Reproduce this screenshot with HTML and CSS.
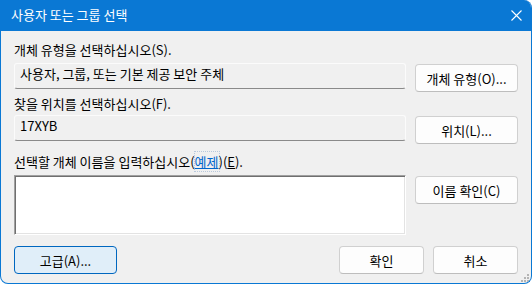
FILE: index.html
```html
<!DOCTYPE html>
<html>
  <head>
    <title>사용자 또는 그룹 선택</title>
    <link rel="stylesheet" href="styles.css">
  </head>
  <body>
    <div class="window">
      <div class="titlebar">
        <span class="title">사용자 또는 그룹 선택</span>
        <svg class="close" width="11" height="11" viewBox="0 0 11 11">
          <path d="M0.5 0.5 L10.5 10.5 M10.5 0.5 L0.5 10.5" stroke="#ffffff" stroke-width="1.1" fill="none" />
        </svg>
      </div>

      <div class="content">
        <div class="label label-first">개체 유형을 선택하십시오(S).</div>
        <div class="row">
          <div class="field">사용자, 그룹, 또는 기본 제공 보안 주체</div>
          <button class="btn btn-side">개체 유형(O)...</button>
        </div>

        <div class="label label-second">찾을 위치를 선택하십시오(F).</div>
        <div class="row">
          <div class="field">17XYB</div>
          <button class="btn btn-side">위치(L)...</button>
        </div>

        <div class="label label-third">선택할 개체 이름을 입력하십시오(<a class="link">예제</a>)(<u>E</u>).</div>
        <div class="row">
          <textarea class="names"></textarea>
          <button class="btn btn-side">이름 확인(C)</button>
        </div>

        <div class="footer">
          <button class="btn btn-default">고급(A)...</button>
          <div class="footer-right">
            <button class="btn btn-footer">확인</button>
            <button class="btn btn-footer">취소</button>
          </div>
        </div>
      </div>

      <svg class="grip" width="9" height="8" viewBox="0 0 9 8">
        <rect x="7" y="0" width="2" height="2" fill="#b4b4b4" />
        <rect x="4" y="3" width="2" height="2" fill="#b4b4b4" />
        <rect x="7" y="3" width="2" height="2" fill="#b4b4b4" />
        <rect x="1" y="6" width="2" height="2" fill="#b4b4b4" />
        <rect x="4" y="6" width="2" height="2" fill="#b4b4b4" />
        <rect x="7" y="6" width="2" height="2" fill="#b4b4b4" />
      </svg>
    </div>
  </body>
</html>
```

FILE: styles.css
```css
body {
  margin: 0;
  background-color: #ffffff;
  font-family: "Noto Sans CJK KR", "Noto Sans", sans-serif;
  font-size: 13px;
  color: #000000;
}
.window {
  position: relative;
  width: 532px;
  height: 284px;
  box-sizing: border-box;
  background-color: #f0f0f0;
  border: 1px solid #0a78d4;
  border-top: none;
  border-radius: 0 8px 8px 8px;
  overflow: hidden;
}
.titlebar {
  display: flex;
  align-items: center;
  justify-content: space-between;
  height: 31px;
  margin: 0 -1px;
  padding: 0 10px 0 11px;
  background-color: #0a78d4;
  color: #ffffff;
}
.title {
  line-height: 16px;
  margin-top: -1px;
}
.close {
  display: block;
  margin-top: -1px;
}
.content {
  padding: 0 12px 0 13px;
}
.label {
  line-height: 16px;
  white-space: nowrap;
}
.label-first {
  margin-top: 11px;
  margin-bottom: 5px;
}
.label-second {
  margin-top: 4px;
  margin-bottom: 3px;
}
.label-third {
  margin-top: 10px;
  margin-bottom: 5px;
}
.link {
  color: #0066cc;
  text-decoration: underline;
  outline: 1px dotted #b8c8dc;
}
.row {
  display: grid;
  grid-template-columns: 392px 103px;
  column-gap: 9px;
  align-items: start;
}
.field {
  height: 26px;
  box-sizing: border-box;
  padding: 2px 5px 0;
  line-height: 16px;
  background-color: #f0f0f0;
  border: 1px solid #fbfbfb;
  border-bottom-color: #8a8a8a;
  border-radius: 3px;
  white-space: nowrap;
}
.names {
  display: block;
  width: 392px;
  height: 60px;
  box-sizing: border-box;
  margin: 0;
  resize: none;
  background-color: #ffffff;
  border: 1px solid;
  border-color: #a0a0a0 #ffffff #ffffff #a0a0a0;
  box-shadow: inset 1px 1px #6f6f6f, inset -1px -1px #e3e3e3;
  font: inherit;
}
.btn {
  height: 28px;
  box-sizing: border-box;
  padding: 0;
  background-color: #fdfdfd;
  border: 1px solid #d0d0d0;
  border-bottom-color: #bdbdbd;
  border-radius: 4px;
  font: inherit;
  color: #000000;
}
.btn-side {
  margin-top: 1px;
}
.row:last-of-type .btn-side {
  margin-top: 0;
}
.footer {
  display: flex;
  justify-content: space-between;
  margin-top: 11px;
}
.footer-right {
  display: flex;
  gap: 9px;
  margin-right: 1px;
}
.btn-default {
  width: 103px;
  background-color: #e0eef9;
  border-color: #0067c0;
}
.btn-footer {
  width: 85px;
}
.grip {
  position: absolute;
  right: 2px;
  bottom: 1px;
}
```
